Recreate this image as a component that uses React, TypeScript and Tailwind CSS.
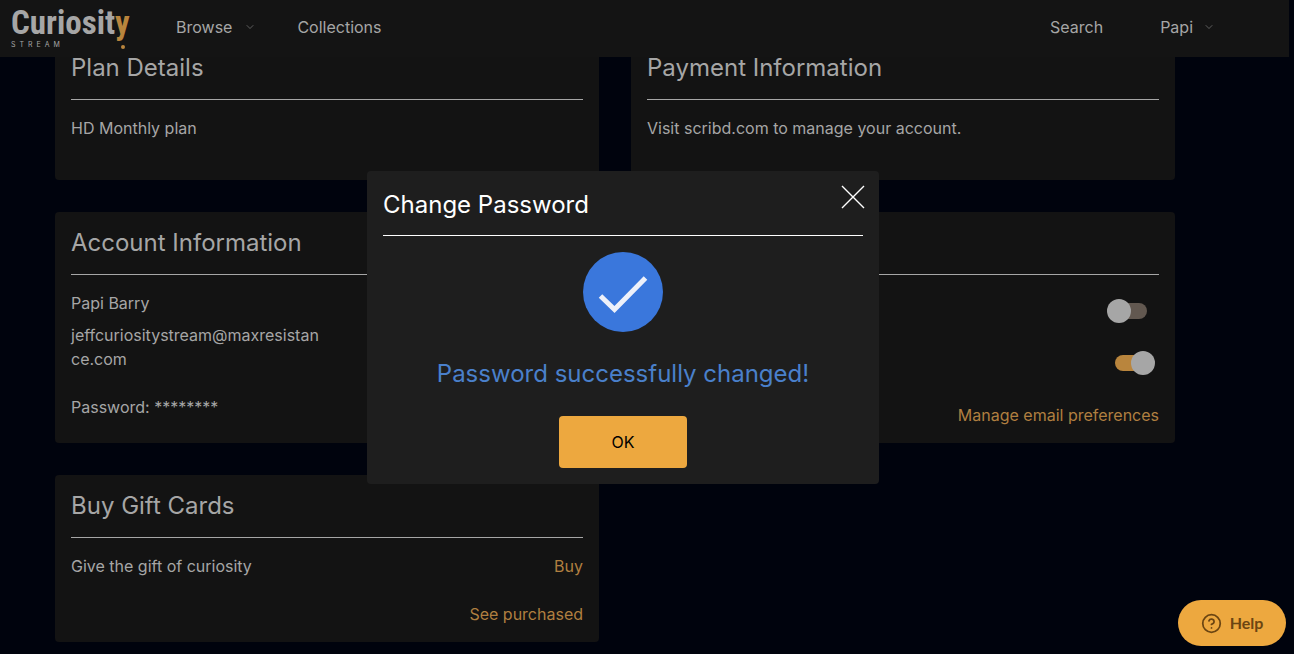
import type { ReactNode } from 'react';
import { ChevronDown, CircleHelp } from 'lucide-react';

interface CardProps {
  title: string;
  children: ReactNode;
}

function Card({ title, children }: CardProps) {
  return (
    <section className="rounded bg-[#131313] p-4">
      <h2 className="h-[47px] border-b border-[#a6a6a6] text-2xl leading-[30px]">{title}</h2>
      <div className="pt-4">{children}</div>
    </section>
  );
}

interface ToggleProps {
  id: string;
  label: string;
  defaultChecked?: boolean;
}

function Toggle({ id, label, defaultChecked }: ToggleProps) {
  return (
    <div className="flex h-6 items-center justify-between pr-3">
      <label htmlFor={id}>{label}</label>
      <input
        id={id}
        type="checkbox"
        role="switch"
        defaultChecked={defaultChecked}
        className="relative h-4 w-8 appearance-none rounded-full bg-[#625850] before:absolute before:-top-1 before:-left-2 before:size-6 before:rounded-full before:bg-[#a6a6a6] checked:bg-[#b9853d] checked:before:left-4"
      />
    </div>
  );
}

function Logo() {
  return (
    <a href="#home" aria-label="Curiosity Stream" className="relative block w-[118px] text-[#a6a6a6]">
      <span className="block font-['Liberation_Sans_Narrow','Roboto_Condensed','Roboto',sans-serif] text-[33px] leading-9 font-bold">
        Curiosit<span className="text-[#b9853d]">y</span>
      </span>
      <span className="block text-[7px] leading-[8px] tracking-[4px]">STREAM</span>
      <span className="absolute right-1 bottom-0 size-1 rounded-full bg-[#b9853d]" />
    </a>
  );
}

function Header() {
  return (
    <header className="fixed top-0 right-[5px] left-0 flex h-[57px] items-center bg-[#141414] pr-[74px] pb-1 pl-[11px]">
      <Logo />
      <nav className="flex flex-1 items-center pl-[47px]">
        <button type="button" className="flex items-center gap-3">
          Browse
          <ChevronDown size={12} strokeWidth={1} />
        </button>
        <a href="#collections" className="ml-[41px]">
          Collections
        </a>
        <a href="#search" className="ml-auto">
          Search
        </a>
        <button type="button" className="ml-[57px] flex items-center gap-[10px]">
          Papi
          <ChevronDown size={12} strokeWidth={1} />
        </button>
      </nav>
    </header>
  );
}

function PasswordDialog() {
  return (
    <div className="fixed inset-0 flex items-center justify-center pr-12">
      <div
        role="dialog"
        aria-labelledby="dialog-title"
        className="relative w-full max-w-lg rounded bg-[#1e1e1e] p-4 text-center"
      >
        <h2
          id="dialog-title"
          className="h-[49px] border-b border-white text-left text-2xl leading-9 text-white"
        >
          Change Password
        </h2>
        <button type="button" aria-label="Close" className="absolute top-[14px] right-[14px] text-white">
          <svg viewBox="0 0 24 24" className="size-6" stroke="currentColor" strokeWidth="1.4">
            <path d="M1 1 23 23M23 1 1 23" />
          </svg>
        </button>
        <svg viewBox="0 0 80 80" className="mx-auto mt-4 size-20" fill="none">
          <circle cx="40" cy="40" r="40" fill="#3a77dc" />
          <path d="M17.5 44 31.500 57.500 62.500 26" stroke="#eef1fa" strokeWidth="5" />
        </svg>
        <p className="my-6 text-2xl leading-9 text-[#4a80cb]">Password successfully changed!</p>
        <button type="button" className="block h-[52px] w-32 mx-auto rounded-sm bg-[#eda83f] text-black">
          OK
        </button>
      </div>
    </div>
  );
}

export default function App() {
  return (
    <div className="min-h-screen bg-[#00030d] font-['Inter',sans-serif] text-base leading-6 text-[#a6a6a6]">
      <main className="grid grid-cols-2 gap-8 pt-[37px] pr-[119px] pb-3 pl-[55px]">
        <Card title="Plan Details">
          <p className="pb-6">HD Monthly plan</p>
        </Card>
        <Card title="Payment Information">
          <p className="pb-6">Visit scribd.com to manage your account.</p>
        </Card>
        <Card title="Account Information">
          <p>Papi Barry</p>
          <p className="mt-2 w-1/2 break-all">jeffcuriositystream@maxresistance.com</p>
          <p className="mt-6 pb-2">Password: ********</p>
        </Card>
        <Card title="Preferences">
          <div className="flex flex-col gap-7 pt-2">
            <Toggle id="updates" label="Send updates on my account" />
            <Toggle id="newsletter" label="Send me the newsletter" defaultChecked />
            <a href="#preferences" className="self-end text-[#b07f40]">
              Manage email preferences
            </a>
          </div>
        </Card>
        <Card title="Buy Gift Cards">
          <div className="flex justify-between">
            <p>Give the gift of curiosity</p>
            <a href="#buy" className="text-[#b07f40]">
              Buy
            </a>
          </div>
          <div className="mt-6 text-right">
            <a href="#purchased" className="text-[#b07f40]">
              See purchased
            </a>
          </div>
        </Card>
      </main>
      <Header />
      <PasswordDialog />
      <button
        type="button"
        className="fixed right-2 bottom-2 flex h-[46px] w-[108px] items-center justify-center gap-2 rounded-full bg-[#eda83f] font-['Lato',sans-serif] font-bold text-[#6b4512]"
      >
        <CircleHelp size={21} />
        Help
      </button>
    </div>
  );
}
